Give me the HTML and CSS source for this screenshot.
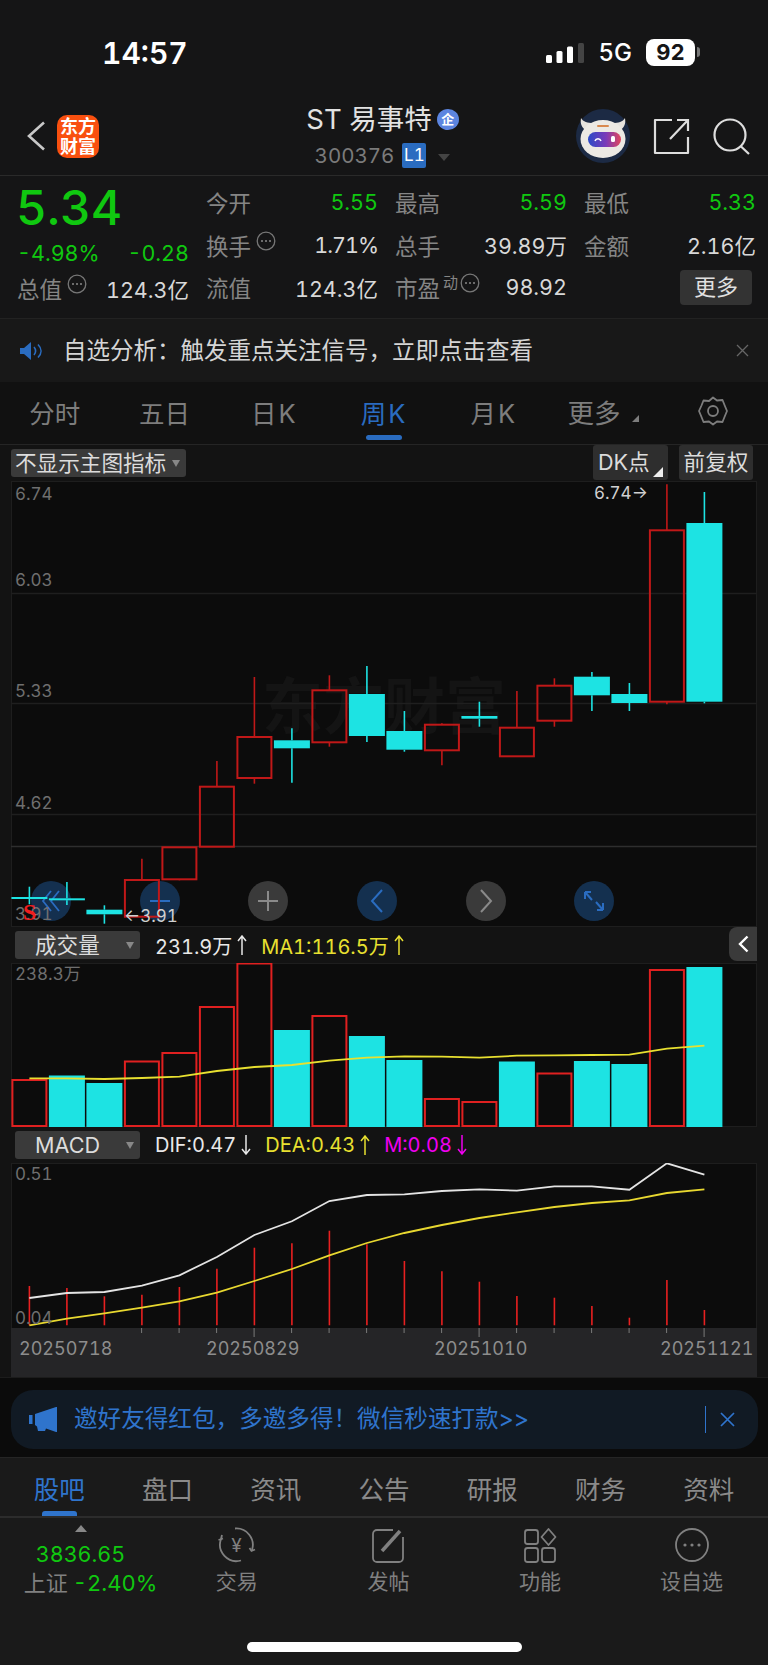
FILE: index.html
```html
<!DOCTYPE html>
<html lang="zh-CN">
<head>
	<meta charset="UTF-8" />
	<title>ST易事特 周K</title>
	<link rel="stylesheet" href="styles.css">
	<script src="chart.js"></script>
</head>
<body>
	<svg class="defs" width="0" height="0">
		<symbol id="dots" viewBox="0 0 20 20">
			<circle cx="10" cy="10" r="8.8" fill="none" stroke="#777" stroke-width="1.3"/>
			<circle cx="6" cy="10" r="1" fill="#888"/><circle cx="10" cy="10" r="1" fill="#888"/><circle cx="14" cy="10" r="1" fill="#888"/>
		</symbol>
		<symbol id="up" viewBox="0 0 14 20">
			<path d="M7 1v19M3 6l4-5 4 5" fill="none" stroke="currentColor" stroke-width="1.500"/>
		</symbol>
		<symbol id="down" viewBox="0 0 14 20">
			<path d="M7 0v19M3 14l4 5 4-5" fill="none" stroke="currentColor" stroke-width="1.500"/>
		</symbol>
	</svg>

	<div class="status">
		<span class="time">14:57</span>
		<div class="status-right">
			<svg class="signal" width="38" height="20" viewBox="0 0 38 20">
				<rect x="0" y="12" width="6" height="8" rx="1.5" fill="#fff"/>
				<rect x="10.500" y="8" width="6" height="12" rx="1.5" fill="#fff"/>
				<rect x="21" y="3.500" width="6" height="16.500" rx="1.5" fill="#fff"/>
				<rect x="32" y="0" width="6" height="20" rx="1.5" fill="#444"/>
			</svg>
			<span class="net">5G</span>
			<span class="battery">92</span>
		</div>
	</div>

	<div class="nav">
		<div class="nav-left">
			<svg class="back" width="20" height="30" viewBox="0 0 20 30"><path d="M18 1.500 3 15l15 13.500" fill="none" stroke="#c8c8c8" stroke-width="2.600"/></svg>
			<div class="logo">东方<br>财富</div>
		</div>
		<div class="nav-title">
			<div class="name">ST 易事特<span class="qi">企</span></div>
			<div class="code">300376<span class="level">L1</span><span class="caret"></span></div>
		</div>
		<div class="nav-right">
			<svg class="robot" width="54" height="54" viewBox="0 0 54 54">
				<defs>
					<linearGradient id="visor"><stop offset="0" stop-color="#2b4ac8"/><stop offset=".55" stop-color="#7b3ab8"/><stop offset="1" stop-color="#e2465c"/></linearGradient>
				</defs>
				<circle cx="27" cy="27" r="27" fill="#1c2a44"/>
				<path d="M5 9c-1 6 1 10 5 12l7-7c-5 0-10-1-12-5zM49 9c1 6-1 10-5 12l-7-7c5 0 10-1 12-5z" fill="#e6e3de"/>
				<ellipse cx="27" cy="30" rx="22.500" ry="19" fill="#ece9e4"/>
				<rect x="21" y="16" width="12" height="2" rx="1" fill="#d9894f"/>
				<rect x="12" y="23" width="33" height="15" rx="7.500" fill="url(#visor)"/>
				<path d="M19 32c1-3 5-3 6 0" fill="none" stroke="#fff" stroke-width="1.500"/>
				<rect x="35" y="27" width="4" height="6" rx="1.500" fill="#fff"/>
			</svg>
			<svg class="share" width="37" height="37" viewBox="0 0 37 37">
				<path d="M19 2H2v33h33V19" fill="none" stroke="#ddd" stroke-width="2.200" stroke-linejoin="round"/>
				<path d="M17 21 35 2M24 2h11v11" fill="none" stroke="#ddd" stroke-width="2.200"/>
			</svg>
			<svg class="search" width="37" height="37" viewBox="0 0 37 37">
				<circle cx="17" cy="17" r="15.500" fill="none" stroke="#ddd" stroke-width="2.200"/>
				<path d="M27.500 28 36 36" stroke="#ddd" stroke-width="2.200"/>
			</svg>
		</div>
	</div>

	<div class="quote">
		<div class="price-box">
			<div class="price">5.34</div>
			<div class="change"><span>-4.98%</span><span>-0.28</span></div>
			<div class="stat"><span class="lbl">总值<svg class="info"><use href="#dots"/></svg></span><span class="val">124.3亿</span></div>
		</div>
		<div class="stats">
			<div class="stat"><span class="lbl">今开</span><span class="val up">5.55</span></div>
			<div class="stat"><span class="lbl">最高</span><span class="val up">5.59</span></div>
			<div class="stat"><span class="lbl">最低</span><span class="val up">5.33</span></div>
			<div class="stat"><span class="lbl">换手<svg class="info"><use href="#dots"/></svg></span><span class="val tight">1.71%</span></div>
			<div class="stat"><span class="lbl">总手</span><span class="val">39.89万</span></div>
			<div class="stat"><span class="lbl">金额</span><span class="val">2.16亿</span></div>
			<div class="stat"><span class="lbl">流值</span><span class="val">124.3亿</span></div>
			<div class="stat"><span class="lbl">市盈<sup class="dyn">动</sup><svg class="info"><use href="#dots"/></svg></span><span class="val">98.92</span></div>
			<div class="stat more-cell"><span class="more-btn">更多</span></div>
		</div>
	</div>

	<div class="notice">
		<svg width="24" height="18" viewBox="0 0 24 18"><path d="M0 6h4l7-6v18l-7-6H0z" fill="#2a6cc0"/><path d="M14 5c2 2.500 2 5.500 0 8M18 2.500c4 4 4 9 0 13" fill="none" stroke="#2a6cc0" stroke-width="1.600"/></svg>
		<span class="notice-text">自选分析：触发重点关注信号，立即点击查看</span>
		<svg class="notice-close" width="13" height="13" viewBox="0 0 13 13"><path d="M1 1l11 11M12 1 1 12" stroke="#666" stroke-width="1.300"/></svg>
	</div>

	<div class="periods">
		<span class="period">分时</span>
		<span class="period">五日</span>
		<span class="period k">日K</span>
		<span class="period k active">周K</span>
		<span class="period k">月K</span>
		<span class="period more">更多<i class="corner-gray"></i></span>
		<span class="period">
			<svg width="30" height="30" viewBox="0 0 30 30"><path d="M15 1.500l4 3 5.500-.5 2 5L29 15l-2.500 6-2 5-5.500-.5-4 3-4-3-5.500.5-2-5L1 15l2.500-5.500 2-5 5.500.5z" fill="none" stroke="#7d7d7d" stroke-width="1.800" stroke-linejoin="round"/><circle cx="15" cy="15" r="5" fill="none" stroke="#7d7d7d" stroke-width="1.800"/></svg>
		</span>
	</div>

	<div class="chart">
		<div class="chart-tools">
			<span class="tool tool-main">不显示主图指标<i class="caret-small"></i></span>
			<span class="tool tool-dk">DK点<i class="corner-white"></i></span>
			<span class="tool tool-fq">前复权</span>
		</div>

		<div class="plot plot-k">
			<div class="ctrls">
				<span class="ctrl blue"><svg width="20" height="22" viewBox="0 0 20 22"><path d="M10 1 2 11l8 10M18 1l-8 10 8 10" fill="none" stroke="#2a6cc0" stroke-width="1.800"/></svg></span>
				<span class="ctrl blue"><svg width="22" height="22" viewBox="0 0 22 22"><path d="M1 11h20" stroke="#2a6cc0" stroke-width="2"/></svg></span>
				<span class="ctrl"><svg width="22" height="22" viewBox="0 0 22 22"><path d="M1 11h20M11 1v20" stroke="#8a8a8a" stroke-width="2"/></svg></span>
				<span class="ctrl blue"><svg width="14" height="24" viewBox="0 0 14 24"><path d="M12 1 2 12l10 11" fill="none" stroke="#2a6cc0" stroke-width="2"/></svg></span>
				<span class="ctrl"><svg width="14" height="24" viewBox="0 0 14 24"><path d="M2 1l10 11L2 23" fill="none" stroke="#8a8a8a" stroke-width="2"/></svg></span>
				<span class="ctrl blue"><svg width="22" height="22" viewBox="0 0 22 22"><path d="M2 2l7 8M2 2v7M2 2h6M20 20l-7-8M20 20v-7M20 20h-6" fill="none" stroke="#2a6cc0" stroke-width="2"/></svg></span>
			</div>
			<svg class="plot-svg" viewBox="11 480 746 446">
				<rect x="11.500" y="480.500" width="745" height="445" fill="none" stroke="#1e1e1e"/>
				<text class="watermark" x="262" y="728">东方财富</text>
				<path d="M11 592.500H757M11 702.500H757M11 813.500H757" stroke="#1f1f1f" stroke-width="1.500"/>
				<path d="M11 845.500H757" stroke="#2e2e2e" stroke-width="1.500"/>
				<g id="candles"></g>
				<text class="axis" x="15" y="499">6.74</text>
				<text class="axis" x="15" y="585">6.03</text>
				<text class="axis" x="15" y="696">5.33</text>
				<text class="axis" x="15" y="808">4.62</text>
				<text class="axis" x="15" y="919">3.91</text>
				<text class="mark" x="594" y="498">6.74→</text>
				<text class="mark" x="124" y="921">←3.91</text>
				<text class="sell" x="23" y="919">S</text>
			</svg>
		</div>

		<div class="legend">
			<span class="select">成交量<i class="caret-small"></i></span>
			<span class="white">231.9万<svg class="arrow"><use href="#up"/></svg></span>
			<span class="yellow">MA1:116.5万<svg class="arrow"><use href="#up"/></svg></span>
			<span class="collapse"><svg width="11" height="18" viewBox="0 0 11 18"><path d="M9.500 1.500 2 9l7.500 7.500" fill="none" stroke="#fff" stroke-width="2.400"/></svg></span>
		</div>

		<div class="plot plot-vol">
			<svg class="plot-svg" viewBox="11 962 746 164">
				<rect x="11.500" y="962.500" width="745" height="163" fill="#0c0c0c" stroke="#1e1e1e"/>
				<g id="volume"></g>
				<text class="axis" x="15" y="979">238.3万</text>
			</svg>
		</div>

		<div class="legend">
			<span class="select">MACD<i class="caret-small"></i></span>
			<span class="white">DIF:0.47<svg class="arrow"><use href="#down"/></svg></span>
			<span class="yellow">DEA:0.43<svg class="arrow"><use href="#up"/></svg></span>
			<span class="pink">M:0.08<svg class="arrow"><use href="#down"/></svg></span>
		</div>

		<div class="plot plot-macd">
			<svg class="plot-svg" viewBox="11 1162 746 214">
				<rect x="11.500" y="1162.500" width="745" height="165" fill="#0c0c0c" stroke="#1e1e1e"/>
				<rect x="11" y="1327" width="746" height="49" fill="#252527"/>
				<g id="macd"></g>
				<text class="axis" x="15" y="1179">0.51</text>
				<text class="axis" x="15" y="1323">0.04</text>
				<text class="date" x="19" y="1354">20250718</text>
				<text class="date" x="206" y="1354">20250829</text>
				<text class="date" x="434" y="1354">20251010</text>
				<text class="date" x="660" y="1354">20251121</text>
			</svg>
		</div>
	</div>

	<div class="promo-wrap">
		<div class="promo">
			<svg width="28" height="26" viewBox="0 0 28 26"><path d="M0 8h3.500v9H0zM6 7l21-7h1v25h-1l-10-3.500-1 2.500H9l-1-4.500L6 18z" fill="#2f74cc"/></svg>
			<span class="promo-text">邀好友得红包，多邀多得！微信秒速打款&gt;&gt;</span>
			<i class="promo-sep"></i>
			<svg width="15" height="15" viewBox="0 0 15 15"><path d="M1 1l13 13M14 1 1 14" stroke="#2f74cc" stroke-width="1.700"/></svg>
		</div>
	</div>

	<div class="tabs">
		<span class="tab active">股吧</span>
		<span class="tab">盘口</span>
		<span class="tab">资讯</span>
		<span class="tab">公告</span>
		<span class="tab">研报</span>
		<span class="tab">财务</span>
		<span class="tab">资料</span>
	</div>

	<div class="toolbar">
		<div class="index">
			<i class="index-caret"></i>
			<div class="index-val">3836.65</div>
			<div class="index-row">上证<span>-2.40%</span></div>
		</div>
		<div class="tool-item">
			<svg width="40" height="36" viewBox="0 0 40 36">
				<path d="M18 1.500A16.500 16.500 0 0 1 35 23M4 12A16.500 16.500 0 0 0 24 33.500" fill="none" stroke="#808080" stroke-width="1.800"/>
				<path d="M1.500 13 6 11.500M5 8l-1 4M38 22.500l-3.500 1.500-2-3" fill="none" stroke="#808080" stroke-width="1.800"/>
				<text class="yen" x="19.500" y="25">¥</text>
			</svg>
			<span>交易</span>
		</div>
		<div class="tool-item">
			<svg width="34" height="36" viewBox="0 0 34 36">
				<path d="M22 3H6a4 4 0 0 0-4 4v24a4 4 0 0 0 4 4h22a4 4 0 0 0 4-4V10" fill="none" stroke="#808080" stroke-width="1.800"/>
				<path d="M11 24 29 4" stroke="#808080" stroke-width="3.500"/>
			</svg>
			<span>发帖</span>
		</div>
		<div class="tool-item">
			<svg width="34" height="36" viewBox="0 0 34 36">
				<rect x="2" y="3" width="13" height="14" rx="2.500" fill="none" stroke="#808080" stroke-width="1.800"/>
				<rect x="2" y="21" width="13" height="14" rx="2.500" fill="none" stroke="#808080" stroke-width="1.800"/>
				<rect x="19" y="21" width="13" height="14" rx="2.500" fill="none" stroke="#808080" stroke-width="1.800"/>
				<path d="M25.500 2 32.500 10 25.500 18 18.500 10z" fill="none" stroke="#808080" stroke-width="1.800" stroke-linejoin="round"/>
			</svg>
			<span>功能</span>
		</div>
		<div class="tool-item">
			<svg width="36" height="36" viewBox="0 0 36 36">
				<circle cx="18" cy="18" r="16" fill="none" stroke="#808080" stroke-width="1.800"/>
				<circle cx="11" cy="18" r="1.600" fill="#808080"/><circle cx="18" cy="18" r="1.600" fill="#808080"/><circle cx="25" cy="18" r="1.600" fill="#808080"/>
			</svg>
			<span>设自选</span>
		</div>
	</div>
	<div class="home"><i class="home-bar"></i></div>
</body>
</html>
```

FILE: styles.css
```css
* {
	box-sizing: border-box;
}
html, body {
	margin: 0;
	padding: 0;
}
body {
	width: 768px;
	height: 1665px;
	overflow: hidden;
	background: #0c0c0c;
	color: #d8d8d8;
	font-family: Inter, "Noto Sans CJK SC", sans-serif;
	font-variant-numeric: tabular-nums;
}
i {
	font-style: normal;
}
.defs {
	position: absolute;
}

/* status bar */
.status {
	height: 104px;
	background: #151516;
	display: flex;
	align-items: center;
	justify-content: space-between;
	padding: 1px 73px 0 102px;
}
.time {
	font-size: 30px;
	font-weight: 600;
	color: #fff;
}
.status-right {
	display: flex;
	align-items: center;
}
.net {
	margin-left: 15px;
	font-size: 24px;
	font-weight: 500;
	color: #fff;
}
.battery {
	position: relative;
	margin-left: 14px;
	width: 49px;
	height: 27px;
	border-radius: 8px;
	background: #fff;
	color: #151516;
	font-size: 22px;
	font-weight: 700;
	line-height: 27px;
	text-align: center;
}
.battery:after {
	content: "";
	position: absolute;
	left: 51px;
	top: 8px;
	width: 3px;
	height: 10px;
	border-radius: 0 3px 3px 0;
	background: #777;
}

/* nav */
.nav {
	height: 71px;
	padding: 0 18px 10px 26px;
	background: #151516;
	display: grid;
	grid-template-columns: 1fr auto 1fr;
	align-items: center;
}
.nav-left {
	display: flex;
	align-items: center;
	gap: 11px;
}
.logo {
	width: 42px;
	height: 43px;
	padding-top: 2px;
	border-radius: 10px;
	background: #f9500f;
	color: #fff;
	font-size: 18px;
	font-weight: 700;
	line-height: 20px;
	text-align: center;
}
.nav-title {
	margin-right: 11px;
	padding-top: 2px;
	text-align: center;
}
.name {
	height: 27px;
	color: #e2e2e2;
	font-size: 27.500px;
	line-height: 27px;
	display: flex;
	align-items: center;
	justify-content: center;
}
.qi {
	width: 22px;
	height: 21px;
	margin-left: 5px;
	border-radius: 50%;
	background: #5c85e0;
	color: #fff;
	font-size: 13px;
	font-weight: 700;
	line-height: 21px;
}
.code {
	margin-top: 10px;
	height: 25px;
	color: #7b7b7b;
	font-size: 20.500px;
	line-height: 25px;
	display: flex;
	align-items: center;
	justify-content: center;
}
.level {
	width: 24px;
	height: 25px;
	margin-left: 8px;
	border-radius: 2px;
	background: #2a6cc0;
	color: #fff;
	font-size: 17px;
}
.caret {
	margin: 3px 0 0 12px;
	border: 6.500px solid transparent;
	border-top: 7px solid #444;
	border-bottom: 0;
}
.nav-right {
	display: flex;
	align-items: center;
	justify-content: flex-end;
	gap: 23px;
}

/* quote */
.quote {
	height: 143px;
	padding: 4px 12px 0 17px;
	border-top: 1px solid #2a2a2a;
	background: #151516;
	display: flex;
	gap: 17px;
}
.price-box {
	width: 172px;
	flex: none;
}
.price {
	height: 56px;
	margin-left: -1px;
	color: #10c810;
	font-size: 48px;
	font-weight: 500;
	line-height: 56px;
}
.change {
	height: 35px;
	color: #10c810;
	font-size: 21.500px;
	line-height: 35px;
	display: flex;
	justify-content: space-between;
}
.price-box .stat {
	height: 34px;
}
.stats {
	flex: 1;
	margin-top: 1px;
	display: grid;
	grid-template-columns: repeat(3, 172px);
	grid-auto-rows: 42.500px;
	column-gap: 17px;
}
.stat {
	display: flex;
	align-items: center;
	justify-content: space-between;
	white-space: nowrap;
}
.lbl {
	color: #858585;
	font-size: 22.500px;
	display: flex;
	align-items: center;
}
.val {
	color: #d8d8d8;
	font-size: 21.500px;
}
.val.up {
	color: #10c810;
}
.val.tight {
	letter-spacing: -1px;
}
.info {
	width: 20px;
	height: 20px;
	margin: 0 0 8px 5px;
}
.dyn {
	font-size: 15px;
	line-height: 15px;
	margin: -9px 0 0 3px;
}
.dyn + .info {
	margin-left: 2px;
}
.more-cell {
	justify-content: flex-end;
	padding-right: 4px;
}
.more-btn {
	width: 72px;
	height: 35px;
	border-radius: 4px;
	background: #333;
	color: #e0e0e0;
	font-size: 22px;
	line-height: 35px;
	text-align: center;
}

/* notice */
.notice {
	height: 64px;
	padding: 0 19px 0 20px;
	border-top: 1px solid #222;
	background: #181818;
	display: flex;
	align-items: center;
}
.notice-text {
	flex: 1;
	margin: 0 0 3px 19px;
	color: #d5d5d5;
	font-size: 23.500px;
}

/* period tabs */
.periods {
	height: 63px;
	border-bottom: 1px solid #252525;
	background: #111;
	display: flex;
}
.period {
	position: relative;
	flex: 1;
	padding-bottom: 4px;
	display: flex;
	align-items: center;
	justify-content: center;
	color: #7d7d7d;
	font-size: 25.500px;
}
.period.k {
	letter-spacing: 2px;
}
.period.active {
	color: #2a6cc0;
}
.period.active:after {
	content: "";
	position: absolute;
	left: 37px;
	bottom: 4px;
	width: 36px;
	height: 5px;
	border-radius: 3px;
	background: #2a6cc0;
}
.period.more {
	font-size: 26.500px;
}
.corner-gray {
	align-self: flex-end;
	margin: 0 0 18px 12px;
	border-left: 7px solid transparent;
	border-bottom: 7px solid #7d7d7d;
}

/* chart */
.chart {
	background: #131313;
}
.chart-tools {
	height: 36px;
	display: flex;
	align-items: flex-start;
	padding: 0 15px 0 11px;
}
.tool {
	position: relative;
	height: 35px;
	background: #2e2e2e;
	border-radius: 3px;
	color: #dcdcdc;
	font-size: 21.600px;
	line-height: 35px;
	text-align: center;
}
.tool-main {
	width: 175px;
	height: 28px;
	margin-top: 4px;
	margin-right: auto;
	padding-left: 4px;
	background: #3a3a3a;
	line-height: 28px;
	text-align: left;
}
.tool-dk {
	width: 75px;
	margin-right: 11px;
	padding-left: 5px;
	text-align: left;
}
.tool-fq {
	width: 74px;
}
.caret-small {
	position: absolute;
	right: 6px;
	top: 11px;
	border: 4px solid transparent;
	border-top: 7px solid #888;
	border-bottom: 0;
}
.corner-white {
	position: absolute;
	right: 5px;
	bottom: 3px;
	border-left: 10px solid transparent;
	border-bottom: 10px solid #eee;
}
.plot {
	position: relative;
	margin-left: 11px;
	width: 746px;
}
.plot-svg {
	position: relative;
	display: block;
	width: 100%;
	height: 100%;
}
.plot-k {
	height: 446px;
	background: #0c0c0c;
}
.plot-vol {
	height: 164px;
}
.plot-macd {
	height: 214px;
}
.axis {
	fill: #6f6f6f;
	font-size: 17px;
}
.mark {
	fill: #d0d0d0;
	font-size: 17px;
}
.date {
	fill: #8d8d8d;
	font-size: 18px;
}
.sell {
	fill: #f01e1e;
	font-size: 24px;
	font-weight: 700;
	font-family: "Liberation Serif", serif;
}
.watermark {
	fill: #141414;
	font-size: 61px;
	font-weight: 700;
}
.ctrls {
	position: absolute;
	left: 20px;
	top: 400px;
	display: flex;
	gap: 68.700px;
}
.ctrl {
	width: 40px;
	height: 40px;
	border-radius: 50%;
	background: #3a3a3a;
	display: flex;
	align-items: center;
	justify-content: center;
}
.ctrl.blue {
	background: #14304f;
}
.legend {
	position: relative;
	height: 36px;
	padding-left: 15px;
	display: flex;
	align-items: center;
	font-size: 20px;
	white-space: nowrap;
}
.legend span {
	display: flex;
	align-items: center;
}
.select {
	position: relative;
	width: 125px;
	height: 28px;
	margin-right: 15px;
	border-radius: 3px;
	background: #3a3a3a;
	color: #dcdcdc;
	font-size: 21.600px;
	line-height: 28px;
	padding-left: 20px;
}
.white {
	color: #e8e8e8;
}
.yellow {
	margin-left: 12px;
	color: #e8e030;
}
.pink {
	margin-left: 12px;
	color: #f000f0;
}
.arrow {
	width: 14px;
	height: 20px;
	margin-left: 3px;
}
.collapse {
	position: absolute;
	right: 11px;
	top: 0;
	width: 28px;
	height: 34px;
	border-radius: 8px 0 0 8px;
	background: #3a3a3a;
	justify-content: center;
}

/* promo */
.promo-wrap {
	height: 80px;
	padding: 12px 10px 0 11px;
	border-top: 1px solid #1c1c1c;
	background: #0b0b0b;
}
.promo {
	height: 59px;
	padding: 0 23px 0 18px;
	border-radius: 22px;
	background: #111a24;
	display: flex;
	align-items: center;
}
.promo-text {
	flex: 1;
	margin: 0 0 6px 17px;
	color: #2f74cc;
	font-size: 23.600px;
}
.promo-sep {
	width: 1px;
	height: 27px;
	margin-right: 14px;
	background: #2f74cc;
}

/* tabs */
.tabs {
	height: 61px;
	padding: 0 5px;
	border-top: 1px solid #252525;
	border-bottom: 2px solid #2c2c2c;
	background: #1a1a1a;
	display: flex;
}
.tab {
	position: relative;
	flex: 1;
	display: flex;
	align-items: center;
	justify-content: center;
	color: #8a8a8a;
	font-size: 25.500px;
}
.tab.active {
	color: #2f74cc;
}
.tab.active:after {
	content: "";
	position: absolute;
	left: 37px;
	bottom: 0;
	width: 35px;
	height: 5px;
	border-radius: 3px 3px 0 0;
	background: #2f74cc;
}

/* toolbar */
.toolbar {
	height: 124px;
	padding-top: 9px;
	background: #1a1a1a;
	display: grid;
	grid-template-columns: 161px repeat(4, 151.600px);
}
.index {
	margin-top: -2px;
	display: flex;
	flex-direction: column;
	align-items: center;
}
.index-caret {
	border: 6.500px solid transparent;
	border-bottom: 7px solid #888;
	border-top: 0;
}
.index-val {
	margin-top: 9px;
	color: #10c810;
	font-size: 21.500px;
	line-height: 26px;
}
.index-row {
	margin: 1px 0 0 20px;
	color: #808080;
	font-size: 22px;
	line-height: 30px;
	white-space: nowrap;
}
.index-row span {
	margin-left: 5px;
	color: #10c810;
}
.tool-item {
	display: flex;
	flex-direction: column;
	align-items: center;
	color: #808080;
	font-size: 21px;
	line-height: 30px;
	gap: 4px;
}
.yen {
	fill: #808080;
	font-size: 19px;
	text-anchor: middle;
}
.home {
	height: 24px;
	border-bottom: 1px solid #555;
	background: #1a1a1a;
	display: flex;
	justify-content: center;
}
.home-bar {
	width: 275px;
	height: 10px;
	border-radius: 5px;
	background: #fff;
}
```

FILE: chart.js
```js
var SVGNS = 'http://www.w3.org/2000/svg';
var RED = '#c01818';
var RED2 = '#e02020';
var CYAN = '#1de3e3';

// type, wick top, body top, body bottom, wick bottom (page pixels)
var candles = [
	['c', 885.7, 896, 898, 903.3],
	['c', 881, 897.3, 899.3, 904],
	['c', 904.3, 908.7, 913.3, 922.7],
	['r', 857.7, 879, 915.7, 915.7],
	['r', 846.3, 846.3, 878.3, 879.3],
	['r', 760, 785.7, 845.7, 845.7],
	['r', 676, 736, 777, 782.7],
	['c', 727.3, 739.3, 747.3, 781.7],
	['r', 674.3, 689.3, 741.3, 745.7],
	['c', 665, 693, 735, 741],
	['c', 710, 730, 748.7, 750.7],
	['r', 722.3, 723.7, 749.3, 764.3],
	['c', 700.7, 715, 717.7, 725.7],
	['r', 690, 726.7, 755.3, 755.3],
	['r', 677.3, 684.7, 719.7, 725.7],
	['c', 671, 675.7, 694.3, 710],
	['c', 682, 693, 702, 710],
	['r', 483.3, 529.3, 700.7, 703.3],
	['c', 491, 522, 700.7, 702.3]
];
var volType = 'rccrrrrcrccrrcrccrc';
var volTop = [1079, 1074.5, 1082, 1060.5, 1052, 1006, 962.5, 1029, 1015, 1035, 1059, 1098, 1101, 1060.5, 1072.5, 1060, 1063, 969, 966];
var ma1 = [1077.3, 1077.3, 1078, 1077, 1075.7, 1070, 1066, 1064, 1059.7, 1056.7, 1055.3, 1055.7, 1056.7, 1054.7, 1054.3, 1054, 1053.7, 1047.7, 1044.7];
var dif = [1297, 1292, 1291, 1284.7, 1274.3, 1256, 1234, 1220.3, 1200, 1194, 1193.3, 1190, 1188.3, 1189.7, 1185.3, 1185.3, 1188.7, 1162.3, 1173.7];
var dea = [1324.3, 1317.7, 1312.3, 1306.7, 1300.3, 1291.7, 1280, 1268, 1254.3, 1242, 1232, 1224, 1217, 1211.3, 1206, 1202, 1199.3, 1192, 1188.3];
var mTop = [1285, 1287, 1295.3, 1293.7, 1286, 1267.7, 1246.7, 1242.3, 1229.7, 1243.3, 1260, 1270.3, 1280.7, 1295, 1296.7, 1305, 1316.7, 1279, 1309];

function cx(i){
	return 29.4 + 37.5 * i;
}

function add(parent, tag, attrs){
	var el = document.createElementNS(SVGNS, tag);
	for(var k in attrs){
		el.setAttribute(k, attrs[k]);
	}
	parent.appendChild(el);
	return el;
}

function line(parent, x, y1, y2, color, w){
	add(parent, 'line', {x1: x, x2: x, y1: y1, y2: y2, stroke: color, 'stroke-width': w});
}

function polyline(parent, ys, color){
	var pts = [];
	for(var i=0; i<ys.length; i++){
		pts.push(cx(i) + ',' + ys[i]);
	}
	add(parent, 'polyline', {points: pts.join(' '), fill: 'none', stroke: color, 'stroke-width': 1.8});
}

function drawCandles(g){
	for(var i=0; i<candles.length; i++){
		var c = candles[i];
		var x = cx(i);
		var color = c[0]==='r' ? RED : CYAN;
		line(g, x, c[1], c[2], color, 1.6);
		line(g, x, c[3], c[4], color, 1.6);
		if(c[0]==='r'){
			add(g, 'rect', {x: x-17, y: c[2], width: 34, height: c[3]-c[2], fill: 'none', stroke: RED, 'stroke-width': 2});
		} else {
			add(g, 'rect', {x: x-18, y: c[2], width: 36, height: c[3]-c[2], fill: CYAN});
		}
	}
}

function drawVolume(g){
	for(var i=0; i<volTop.length; i++){
		var x = cx(i);
		if(volType.charAt(i)==='r'){
			add(g, 'rect', {x: x-17, y: volTop[i], width: 34, height: 1125-volTop[i], fill: 'none', stroke: RED2, 'stroke-width': 2});
		} else {
			add(g, 'rect', {x: x-18, y: volTop[i], width: 36, height: 1126-volTop[i], fill: CYAN});
		}
	}
	polyline(g, ma1, '#e8e030');
}

function drawMacd(g){
	for(var i=0; i<mTop.length; i++){
		line(g, cx(i), mTop[i], 1324.3, '#e82020', 1.6);
		if(i>=3){
			var big = i===6 || i===12 || i===18;
			line(g, cx(i)-0.3, 1327, big ? 1336 : 1332, '#7a7a7a', 1);
		}
	}
	polyline(g, dif, '#e4e4e4');
	polyline(g, dea, '#e8d830');
}

window.onload = function(){
	drawCandles(document.getElementById('candles'));
	drawVolume(document.getElementById('volume'));
	drawMacd(document.getElementById('macd'));
};
```
